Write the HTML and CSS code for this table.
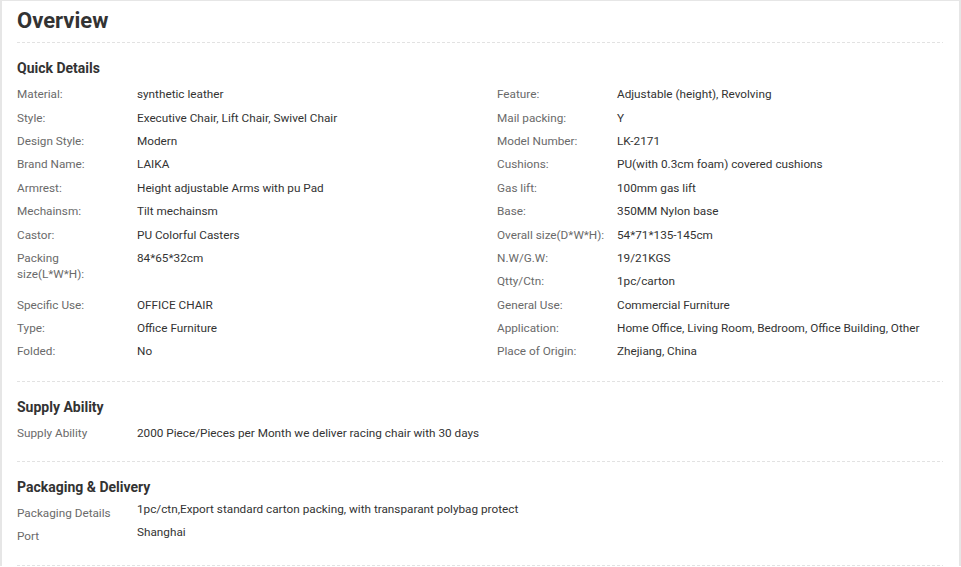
FILE: index.html
```html
<!DOCTYPE html>
<html>
<head>
<meta charset="utf-8">
<link rel="stylesheet" href="styles.css">
</head>
<body>
<div class="panel">
  <h1 class="title section">Overview</h1>

  <div class="section quick">
    <h2 class="heading">Quick Details</h2>
    <div class="cols">
      <div class="col">
        <div class="row"><span class="label">Material:</span><span class="value">synthetic leather</span></div>
        <div class="row"><span class="label">Style:</span><span class="value">Executive Chair, Lift Chair, Swivel Chair</span></div>
        <div class="row"><span class="label">Design Style:</span><span class="value">Modern</span></div>
        <div class="row"><span class="label">Brand Name:</span><span class="value">LAIKA</span></div>
        <div class="row"><span class="label">Armrest:</span><span class="value">Height adjustable Arms with pu Pad</span></div>
        <div class="row"><span class="label">Mechainsm:</span><span class="value">Tilt mechainsm</span></div>
        <div class="row"><span class="label">Castor:</span><span class="value">PU Colorful Casters</span></div>
        <div class="row tall"><span class="label">Packing size(L*W*H):</span><span class="value">84*65*32cm</span></div>
        <div class="row"><span class="label">Specific Use:</span><span class="value">OFFICE CHAIR</span></div>
        <div class="row"><span class="label">Type:</span><span class="value">Office Furniture</span></div>
        <div class="row"><span class="label">Folded:</span><span class="value">No</span></div>
      </div>
      <div class="col">
        <div class="row"><span class="label">Feature:</span><span class="value">Adjustable (height), Revolving</span></div>
        <div class="row"><span class="label">Mail packing:</span><span class="value">Y</span></div>
        <div class="row"><span class="label">Model Number:</span><span class="value">LK-2171</span></div>
        <div class="row"><span class="label">Cushions:</span><span class="value">PU(with 0.3cm foam) covered cushions</span></div>
        <div class="row"><span class="label">Gas lift:</span><span class="value">100mm gas lift</span></div>
        <div class="row"><span class="label">Base:</span><span class="value">350MM Nylon base</span></div>
        <div class="row"><span class="label">Overall size(D*W*H):</span><span class="value">54*71*135-145cm</span></div>
        <div class="row"><span class="label">N.W/G.W:</span><span class="value">19/21KGS</span></div>
        <div class="row"><span class="label">Qtty/Ctn:</span><span class="value">1pc/carton</span></div>
        <div class="row"><span class="label">General Use:</span><span class="value">Commercial Furniture</span></div>
        <div class="row"><span class="label">Application:</span><span class="value">Home Office, Living Room, Bedroom, Office Building, Other</span></div>
        <div class="row"><span class="label">Place of Origin:</span><span class="value">Zhejiang, China</span></div>
      </div>
    </div>
  </div>

  <div class="section supply">
    <h2 class="heading">Supply Ability</h2>
    <div class="row"><span class="label">Supply Ability</span><span class="value">2000 Piece/Pieces per Month we deliver racing chair with 30 days</span></div>
  </div>

  <div class="section packaging">
    <h2 class="heading">Packaging &amp; Delivery</h2>
    <div class="row prow"><span class="label">Packaging Details</span><span class="value">1pc/ctn,Export standard carton packing, with transparant polybag protect</span></div>
    <div class="row prow"><span class="label">Port</span><span class="value">Shanghai</span></div>
  </div>
</div>
</body>
</html>
```

FILE: styles.css
```css
* { box-sizing: border-box; }

html, body {
  margin: 0;
  padding: 0;
  background: #fff;
}

body {
  font-family: Roboto, "Liberation Sans", Arial, sans-serif;
  color: #333;
}

.panel {
  width: 961px;
  border-top: 1px solid #e6e6e6;
  border-left: 2px solid #e6e6e6;
  border-right: 2px solid #e6e6e6;
  padding: 0 16px 0 15px;
}

.section {
  background-image: repeating-linear-gradient(to right, #e2e2e2 0 3px, transparent 3px 5px);
  background-size: 100% 1px;
  background-position: left bottom;
  background-repeat: no-repeat;
}

.title {
  margin: 0;
  padding-top: 4px;
  padding-bottom: 6px;
  font-size: 22px;
  line-height: 32px;
  font-weight: 700;
  color: #333;
}

.heading {
  margin: 0;
  padding-top: 15px;
  padding-bottom: 4.4px;
  font-size: 14px;
  line-height: 20px;
  font-weight: 700;
  color: #333;
}

.quick { padding-bottom: 19.2px; }
.supply { padding-bottom: 17.2px; }
.packaging { padding-bottom: 18.6px; }

.cols {
  display: grid;
  grid-template-columns: 480px 1fr;
}

.row {
  display: flex;
  align-items: flex-start;
  font-size: 11.75px;
  line-height: 16px;
  padding: 4px 0 3.36px;
}

.row.tall { height: 46.72px; }

.label {
  flex: 0 0 120px;
  width: 120px;
  color: #6a6a6a;
  padding-right: 10px;
}

.value {
  color: #333;
}

.prow {
  padding-bottom: 3px;
}

.prow .value {
  margin-top: -4px;
}
```
